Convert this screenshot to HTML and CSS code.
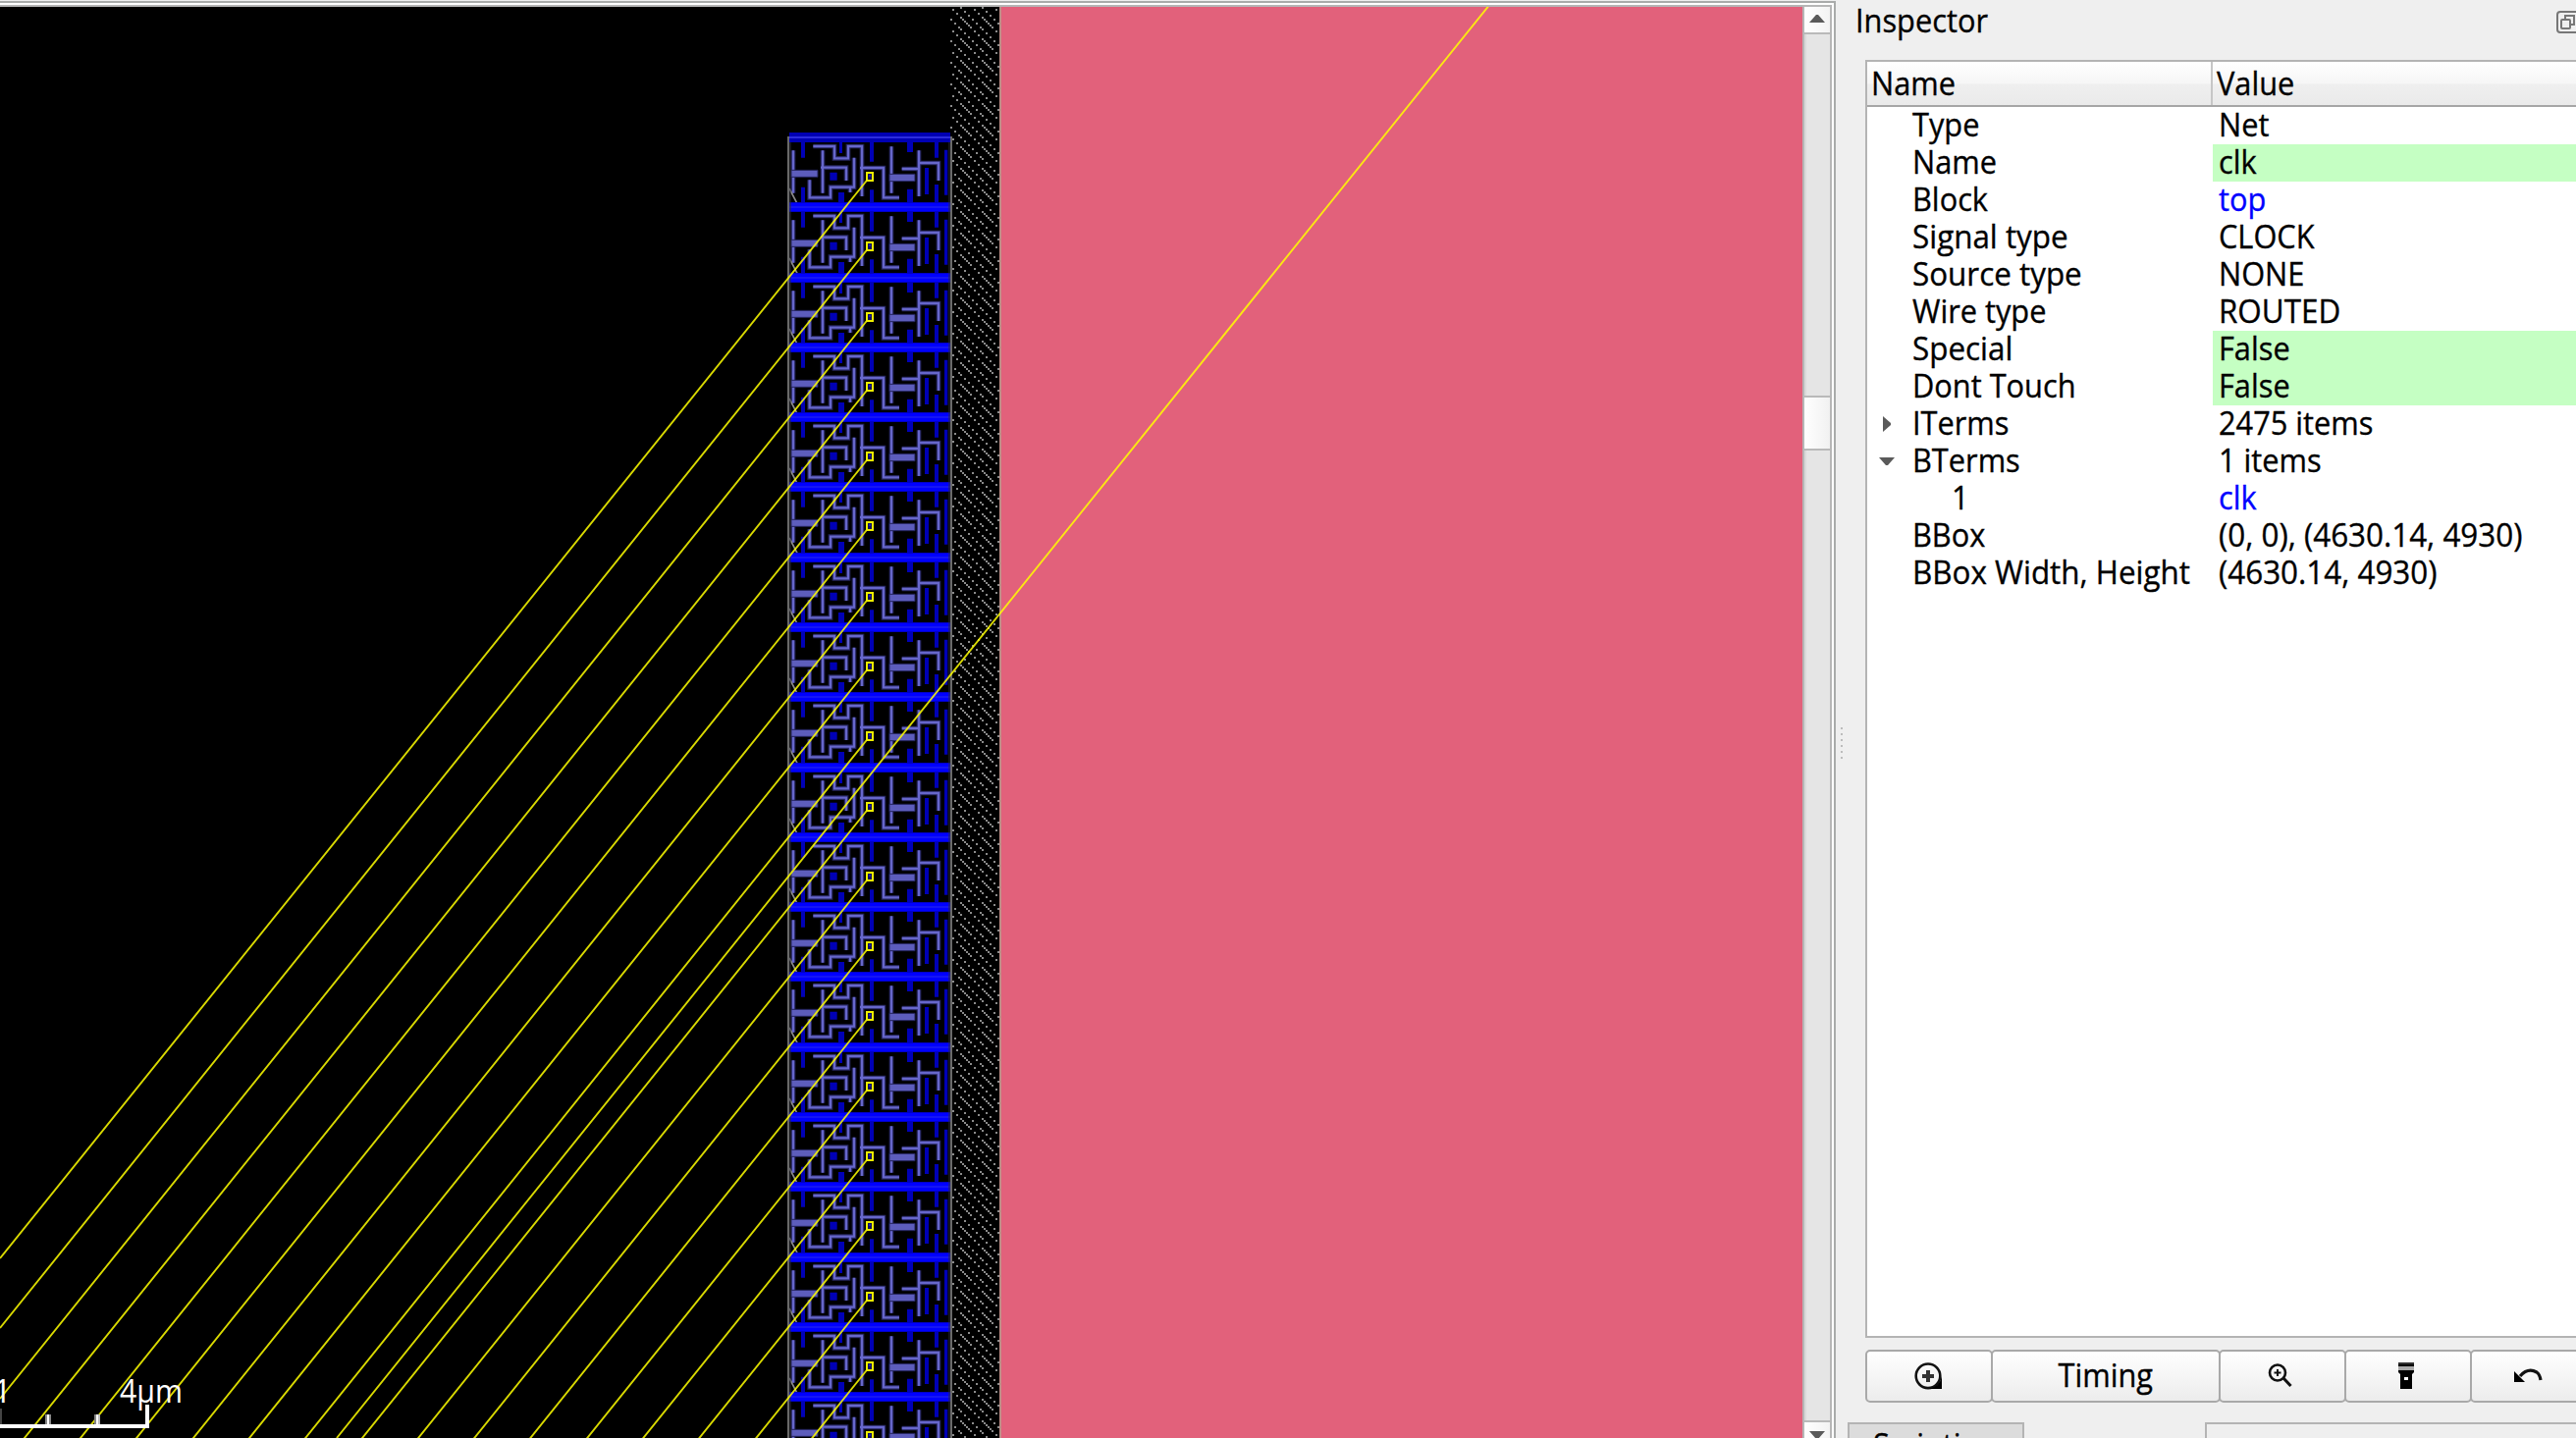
FILE: index.html
```
<!DOCTYPE html>
<html lang="en">
<head>
<meta charset="utf-8">
<title>Inspector</title>
<link rel="stylesheet" href="styles.css">
</head>
<body>
<main class="window">
  <section class="viewer">
    <div class="viewer-frame">
      <svg class="layout" width="1836" height="1458" viewBox="0 7 1836 1458">
        <defs>
          <pattern id="hatch" x="968" y="7" width="22" height="22" patternUnits="userSpaceOnUse">
            <path fill="#8b8b8b" shape-rendering="crispEdges" d="M10 0h2v2h-2zM2 2h2v2h-2zM14 4h2v2h-2zM6 6h2v2h-2zM18 8h2v2h-2zM10 10h2v2h-2zM12 12h2v2h-2zM0 12h2v2h-2zM14 14h2v2h-2zM16 16h2v2h-2zM4 16h2v2h-2zM18 18h2v2h-2zM20 20h2v2h-2zM8 20h2v2h-2z"/>
          </pattern>
          <path id="wires" d="M115 87H180V124H222V87H264V240M258 153H330V244H378M54 100V230M144 100V230M138 152H216V192M240 122V212H168V244H104V190M228 212V228M354 88V230M386 156H438M438 100V240M438 138H498V192"/>
          <g id="cell" transform="scale(.33333) translate(0 -60)">
            <path fill="#0000b6" d="M78 45h12v77H78zM195 45h9v63h-9zM288 45h12v89h-12zM402 45h18v60h-18zM486 45h12v77h-12zM516 98h10v138h-10zM456 153h12v81h-12zM166 167h22v24h-22zM78 212h12v63H78zM192 228h18v47h-18zM288 220h12v55h-12zM402 218h18v57h-18zM486 204h12v71h-12z"/>
            <use href="#wires" fill="none" stroke="#24245c" stroke-width="14"/>
            <use href="#wires" fill="none" stroke="#6767cb" stroke-width="7"/>
            <path fill="#5d5dbc" stroke="#24245c" stroke-width="3" d="M48 160h81v21H48zM348 172h78v22h-78z"/>
            <path stroke="#8a8a8a" stroke-width="5" d="M42 216L66 262"/>
          </g>
          <g id="rail"><path fill="#0000c8" d="M804-5h164V5H804z"/><path fill="#0000ff" d="M804-4h164V4H804z"/><path fill="#1515f4" d="M804-1h164v2H804z"/></g>
          <g id="pin"><path fill="#101060" stroke="#eeee00" stroke-width="2" d="M883-4h6V4h-6z"/><path fill="#2020b0" d="M885-2h2v2h-2z"/></g>
        </defs>
        <path fill="#000" d="M0 7h1018v1458H0z"/>
        <path fill="url(#hatch)" d="M968 7h50v1458h-50z"/>
        <path fill="#e2617b" d="M1020 7h816v1458h-816z"/>
        <path fill="#bd8e87" d="M1018 7h2v1458h-2z"/>
        <path fill="#000" d="M802 139h168v1326H802z"/>
        <g>
          <use href="#cell" x="790" y="140"/><use href="#cell" x="790" y="211"/><use href="#cell" x="790" y="283"/><use href="#cell" x="790" y="354"/><use href="#cell" x="790" y="425"/><use href="#cell" x="790" y="496"/><use href="#cell" x="790" y="568"/><use href="#cell" x="790" y="639"/><use href="#cell" x="790" y="710"/><use href="#cell" x="790" y="782"/><use href="#cell" x="790" y="853"/><use href="#cell" x="790" y="924"/><use href="#cell" x="790" y="995"/><use href="#cell" x="790" y="1067"/><use href="#cell" x="790" y="1138"/><use href="#cell" x="790" y="1209"/><use href="#cell" x="790" y="1281"/><use href="#cell" x="790" y="1352"/><use href="#cell" x="790" y="1423"/>
        </g>
        <path fill="#0000b4" d="M804 135h164v10H804z"/><path fill="#2c2cdc" d="M804 139h164v2H804z"/>
        <g>
          <use href="#rail" y="211"/><use href="#rail" y="283"/><use href="#rail" y="354"/><use href="#rail" y="425"/><use href="#rail" y="496"/><use href="#rail" y="568"/><use href="#rail" y="639"/><use href="#rail" y="710"/><use href="#rail" y="782"/><use href="#rail" y="853"/><use href="#rail" y="924"/><use href="#rail" y="995"/><use href="#rail" y="1067"/><use href="#rail" y="1138"/><use href="#rail" y="1209"/><use href="#rail" y="1281"/><use href="#rail" y="1352"/><use href="#rail" y="1423"/>
        </g>
        <path fill="#696969" d="M802 139h2v1326h-2zM968 139h2v1326h-2z"/>
        <path fill="#303038" d="M804 145h2v1320h-2zM966 145h2v1320h-2z" opacity=".5"/>
        <path class="flight" d="M884 182.500L0 1282M884 253.500L0 1353M884 325.500L0 1425M884 396.500L0 1496M884 467.500L0 1567M884 538.500L0 1638M884 610.500L0 1710M884 681.500L0 1781M884 752.500L0 1852M884 824.500L0 1924M884 895.500L0 1995M884 966.500L0 2066M884 1037.500L0 2137M884 1109.500L0 2209M884 1180.500L0 2280M884 1251.500L0 2351M884 1323.500L0 2423M884 1394.500L0 2494M1518 4L343 1465"/>
        <g>
          <use href="#pin" y="180"/><use href="#pin" y="251"/><use href="#pin" y="323"/><use href="#pin" y="394"/><use href="#pin" y="465"/><use href="#pin" y="536"/><use href="#pin" y="608"/><use href="#pin" y="679"/><use href="#pin" y="750"/><use href="#pin" y="822"/><use href="#pin" y="893"/><use href="#pin" y="964"/><use href="#pin" y="1035"/><use href="#pin" y="1107"/><use href="#pin" y="1178"/><use href="#pin" y="1249"/><use href="#pin" y="1321"/><use href="#pin" y="1392"/><use href="#pin" y="1463"/>
        </g>
        <path fill="#fff" d="M0 1451h148v-20h4v24H0zM48 1441h2v10h-2zM98 1441h2v10h-2z"/>
        <path fill="#888" d="M46 1441h2v10h-2zM50 1441h2v10h-2zM96 1441h2v10h-2z"/><path fill="#bbb" d="M100 1441h2v10h-2z"/><path fill="#444" d="M0 1435h2v16H0z"/>
        <text class="scale-label" x="-7" y="1429">1</text>
        <text class="scale-label" x="122" y="1429" textLength="64" lengthAdjust="spacingAndGlyphs">4µm</text>
      </svg>
      <div class="scrollbar">
        <div class="scroll-button up"><svg width="16" height="8" viewBox="0 0 16 8"><path fill="#5a5a5a" d="M0 8L7 0h2l7 8z"/></svg></div>
        <div class="scroll-track before"></div>
        <div class="scroll-thumb"></div>
        <div class="scroll-track after"></div>
        <div class="scroll-button down"><svg width="16" height="8" viewBox="0 0 16 8"><path fill="#5a5a5a" d="M0 0L7 8h2l7-8z"/></svg></div>
      </div>
    </div>
  </section>
  <div class="splitter"><i></i><i></i><i></i><i></i><i></i><i></i></div>
  <aside class="inspector">
    <header class="dock-title">
      <span class="t">Inspector</span>
      <svg width="24" height="24" viewBox="0 0 24 24" fill="none" stroke="#777" stroke-width="2"><rect x="1" y="1" width="22" height="21" rx="3"/><path d="M9 9V5h9v9h-4"/><rect x="5" y="9" width="9" height="9" rx="1"/></svg>
    </header>
    <div class="tree">
      <div class="row head"><div class="name"><span class="t">Name</span></div><div class="value"><span class="t">Value</span></div></div>
      <div class="row"><div class="name"><span class="t">Type</span></div><div class="value"><span class="t">Net</span></div></div>
      <div class="row"><div class="name"><span class="t">Name</span></div><div class="value editable"><span class="t">clk</span></div></div>
      <div class="row"><div class="name"><span class="t">Block</span></div><div class="value link"><span class="t">top</span></div></div>
      <div class="row"><div class="name"><span class="t long">Signal type</span></div><div class="value"><span class="t">CLOCK</span></div></div>
      <div class="row"><div class="name"><span class="t long">Source type</span></div><div class="value"><span class="t">NONE</span></div></div>
      <div class="row"><div class="name"><span class="t">Wire type</span></div><div class="value"><span class="t long">ROUTED</span></div></div>
      <div class="row"><div class="name"><span class="t long">Special</span></div><div class="value editable"><span class="t">False</span></div></div>
      <div class="row"><div class="name"><span class="t">Dont Touch</span></div><div class="value editable"><span class="t">False</span></div></div>
      <div class="row"><div class="name branch"><svg width="16" height="16" viewBox="0 0 16 16"><path fill="#5a5a5a" d="M4 0l8 7v2l-8 7z"/></svg><span class="t">ITerms</span></div><div class="value"><span class="t">2475 items</span></div></div>
      <div class="row"><div class="name branch"><svg width="16" height="16" viewBox="0 0 16 16"><path fill="#5a5a5a" d="M0 4h16l-7 8H7z"/></svg><span class="t">BTerms</span></div><div class="value"><span class="t">1 items</span></div></div>
      <div class="row"><div class="name child"><span class="t">1</span></div><div class="value link"><span class="t">clk</span></div></div>
      <div class="row"><div class="name"><span class="t">BBox</span></div><div class="value"><span class="t long">(0, 0), (4630.14, 4930)</span></div></div>
      <div class="row"><div class="name"><span class="t long">BBox Width, Height</span></div><div class="value"><span class="t long">(4630.14, 4930)</span></div></div>
    </div>
    <div class="actions">
      <button class="action"><svg width="32" height="32" viewBox="0 0 32 32"><path fill="none" stroke="#111" stroke-width="2.600" d="M15 3.500a12.300 12.300 0 1 0 0 24.600a12.300 12.300 0 1 0 0-24.600z"/><path d="M29 16v13H16q11-2 13-13z"/><path stroke="#333" stroke-width="4" d="M9 16h12M15 10v12"/></svg></button>
      <button class="action wide"><span class="t">Timing</span></button>
      <button class="action"><svg width="32" height="32" viewBox="0 0 32 32" fill="none" stroke="#111"><circle cx="11" cy="12.500" r="8" stroke-width="2.600"/><path stroke-width="2" d="M11 9v7M7.500 12.500h7"/><path stroke-width="3" d="M17 18l7.500 8"/></svg></button>
      <button class="action"><svg width="32" height="32" viewBox="0 0 32 32"><path fill="#333" d="M6 2h16v2H6z"/><path d="M6 4h16v2H6zM6 10h16v2l-2 2v15H8V14l-2-2z"/><path fill="#aaa" d="M6 6h16v4H6z"/><path fill="#fff" d="M12 17h4v3h-4z"/></svg></button>
      <button class="action last"><svg width="32" height="32" viewBox="0 0 32 32"><path d="M-4 10l11 11H-4z" transform="translate(0 1)"/><path fill="none" stroke="#111" stroke-width="3.200" d="M2 16q8-9 17-4q3 2 4 8"/></svg></button>
    </div>
    <footer class="dock-tabs"><div class="tab"><span class="t">Scripting</span></div><div class="pane"></div></footer>
  </aside>
</main>
</body>
</html>
```

FILE: styles.css
```
* { box-sizing: border-box; }
body {
  margin: 0;
  background: #efefef;
  color: #000;
  font: 33px/36px "Open Sans", "Noto Sans", sans-serif;
  overflow: hidden;
}
.window { display: flex; width: 2624px; height: 1465px; overflow: hidden; }
.t {
  display: inline-block;
  white-space: nowrap;
  transform: scaleX(.932);
  transform-origin: left center;
  -webkit-text-stroke: .35px currentColor;
}
.long { transform: scaleX(.951); }
.viewer {
  flex: none;
  width: 1870px;
  height: 1465px;
  padding-top: 1px;
}
.viewer-frame {
  display: flex;
  height: 1464px;
  padding-top: 2px;
  border-top: 2px solid #a9abaa;
  border-right: 2px solid #a9abaa;
  background: #fff;
}
.layout { flex: none; display: block; border-top: 2px solid #b6b6b6; box-sizing: content-box; }
.flight { fill: none; stroke: #ff0; stroke-width: 1.9; stroke-opacity: .85; }
.scale-label { fill: #fff; font-size: 33px; }
.scrollbar {
  display: flex;
  flex-direction: column;
  width: 30px;
  height: 1460px;
  border: solid #b6b6b6;
  border-width: 2px 2px 0;
}
.scroll-button {
  display: flex;
  align-items: center;
  justify-content: center;
  background: linear-gradient(90deg, #fff, #f3f3f3);
}
.up { height: 26px; padding-bottom: 2px; }
.down { height: 16px; padding-top: 9px; }
.scroll-track {
  background: #e5e5e5;
  border: solid #b9b9b9;
  border-width: 2px 0;
  box-shadow: inset 2px 0 #d9d9d9;
}
.before { height: 372px; }
.scroll-thumb { height: 52px; background: linear-gradient(90deg, #fff, #f1f1f1); }
.after { height: 992px; }
.splitter {
  display: flex;
  flex: none;
  flex-direction: column;
  justify-content: center;
  gap: 4px;
  width: 12px;
  padding: 48px 0 0 5px;
}
.splitter i { width: 2px; height: 2px; background: #bcbcbc; }
.inspector { display: flex; flex: none; flex-direction: column; width: 764px; }
.dock-title {
  display: flex;
  align-items: flex-start;
  justify-content: space-between;
  height: 61px;
  padding: 3px 18px 0 8px;
}
.dock-title svg { margin-top: 8px; }
.tree {
  height: 1302px;
  margin-left: 18px;
  background: #fff;
  border: 2px solid #b4b4b4;
}
.row { display: flex; height: 38px; }
.name { flex: none; width: 352px; padding-left: 46px; }
.value { flex: 1; padding-left: 6px; }
.head {
  height: 46px;
  line-height: 44px;
  background: linear-gradient(#fff 0%, #f6f6f6 50%, #efefef 52%, #eaeaea);
  border-bottom: 2px solid #a6a6a6;
}
.head .name { padding-left: 4px; border-right: 2px solid #c6c6c6; }
.head .value { padding-left: 4px; }
.editable { background: #c5ffc3; }
.link { color: #00f; }
.branch { display: flex; align-items: center; gap: 18px; padding: 0 0 0 12px; }
.branch .t { margin-top: -2px; }
.child { padding-left: 86px; }
.actions { display: flex; margin: 12px 0 0 18px; height: 54px; }
.action {
  display: flex;
  align-items: center;
  justify-content: center;
  width: 130px;
  height: 54px;
  margin-right: -2px;
  padding: 0;
  flex: none;
  border: 2px solid #a9a9a9;
  border-radius: 5px;
  background: linear-gradient(#fff, #ececec);
  color: #000;
  font: inherit;
}
.action svg { overflow: visible; }
.wide { width: 234px; }
.wide .t { margin-top: -2px; transform-origin: center; }
.dock-tabs { display: flex; height: 16px; margin-top: 20px; overflow: hidden; }
.tab {
  width: 180px;
  height: 50px;
  padding: 3px 0 0 24px;
  background: #dcdcdc;
  border: 2px solid #b4b4b4;
}
.pane { width: 400px; height: 50px; margin-left: 184px; border: 2px solid #b4b4b4; border-right: 0; }
```
